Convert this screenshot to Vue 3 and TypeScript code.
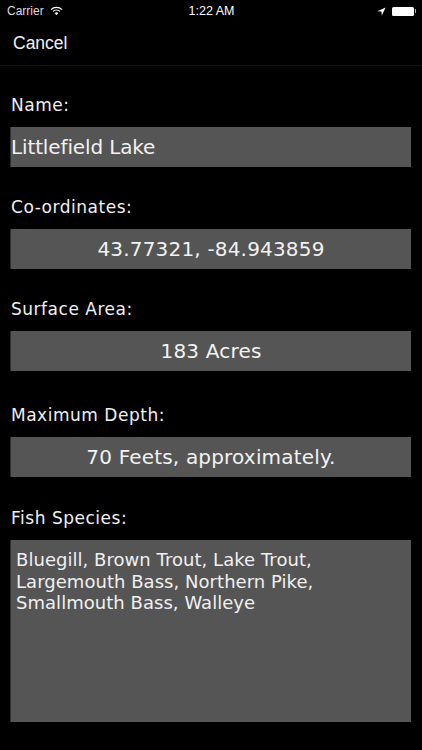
<script setup lang="ts">
interface Field { label: string; value: string; left?: boolean; gap: string }
const fields: Field[] = [
  { label: 'Name:', value: 'Littlefield Lake', left: true, gap: 'g0' },
  { label: 'Co-ordinates:', value: '43.77321, -84.943859', gap: 'g1' },
  { label: 'Surface Area:', value: '183 Acres', gap: 'g1' },
  { label: 'Maximum Depth:', value: '70 Feets, approximately.', gap: 'g2' },
]
</script>

<template>
  <div class="screen">
    <div class="status">
      <div class="st-left">
        <span>Carrier</span>
        <svg width="13" height="10" viewBox="0 0 14 11" class="wifi">
          <path d="M1 4 A8.5 8.5 0 0 1 13 4" fill="none" stroke="#fff" stroke-width="1.3" />
          <path d="M3.2 6 A5.4 5.4 0 0 1 10.8 6" fill="none" stroke="#fff" stroke-width="1.3" />
          <path d="M7 10 L5 7.9 A2.9 2.9 0 0 1 9 7.9 Z" fill="#fff" />
        </svg>
      </div>
      <div class="st-time">1:22 AM</div>
      <div class="st-right">
        <svg width="9" height="9" viewBox="0 0 9 9"><path d="M8.6 0.4 L0.4 4.2 L4.4 4.6 L4.8 8.6 Z" fill="#fff" /></svg>
        <div class="battery"></div>
        <div class="nub"></div>
      </div>
    </div>
    <div class="nav">Cancel</div>
    <div class="form">
      <template v-for="f in fields" :key="f.label">
        <div class="label" :class="f.gap">{{ f.label }}</div>
        <div class="field" :class="{ left: f.left }">{{ f.value }}</div>
      </template>
      <div class="label g3">Fish Species:</div>
      <div class="area">Bluegill, Brown Trout, Lake Trout,<br />Largemouth Bass, Northern Pike,<br />Smallmouth Bass, Walleye</div>
    </div>
  </div>
</template>

<style scoped>
.screen {
  width: 422px;
  height: 750px;
  background: #000;
  color: #fff;
  overflow: hidden;
  font-family: "DejaVu Sans", sans-serif;
}
.status {
  height: 22px;
  display: grid;
  grid-template-columns: 1fr auto 1fr;
  align-items: center;
  padding: 0 6px 0 7px;
  box-sizing: border-box;
  font-family: "Liberation Sans", sans-serif;
  font-size: 12px;
}
.st-left { display: flex; align-items: center; gap: 6px; color: #ddd; }
.st-time { font-size: 12.5px; color: #fff; }
.st-right { display: flex; align-items: center; justify-content: flex-end; }
.st-right svg { margin-right: 6px; }
.battery { width: 22px; height: 9px; background: #fff; border-radius: 1.5px; }
.nub { width: 1.5px; height: 4px; background: #aaa; margin-left: 1px; }
.nav {
  height: 44px;
  box-sizing: border-box;
  padding: 11px 13px 0;
  border-bottom: 1px solid #161616;
  font-family: "Liberation Sans", sans-serif;
  font-size: 17.5px;
  color: #f2f2f2;
}
.form { padding: 0 11px; }
.label {
  height: 22px;
  line-height: 22px;
  font-size: 17px;
  letter-spacing: 0.52px;
  color: #f0f0f0;
}
.g0 { margin-top: 28px; margin-bottom: 11px; }
.g1 { margin-top: 29px; margin-bottom: 11px; }
.g2 { margin-top: 33px; margin-bottom: 11px; }
.g3 { margin-top: 30px; margin-bottom: 11px; }
.field {
  height: 40px;
  line-height: 41px;
  width: 400px;
  background: #555;
  box-shadow: -1px 0 0 #2e2e2e;
  font-size: 20px;
  letter-spacing: 0.18px;
  text-align: center;
  color: #f2f2f2;
  white-space: nowrap;
}
.field.left { text-align: left; letter-spacing: -0.13px; }
.area {
  width: 400px;
  height: 182px;
  box-sizing: border-box;
  background: #555;
  box-shadow: -1px 0 0 #2e2e2e;
  padding: 9px 5px;
  font-size: 18px;
  letter-spacing: 0.04px;
  line-height: 21.5px;
  color: #f0f0f0;
  white-space: nowrap;
}
</style>
